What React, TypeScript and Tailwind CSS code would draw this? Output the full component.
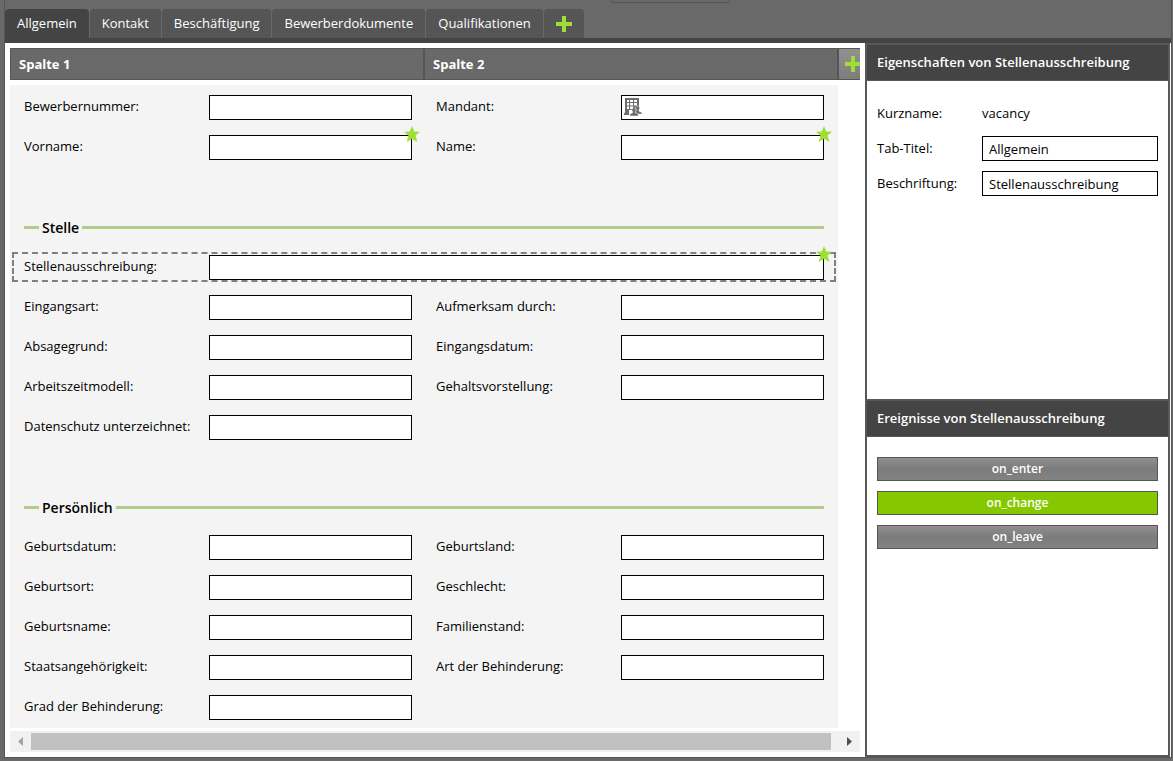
import { useId, useState } from "react";
import type { ReactNode } from "react";

function Plus() {
  return (
    <svg width="16" height="16" viewBox="0 0 16 16" fill="#9fde35" className="shrink-0" aria-hidden="true">
      <path d="M6 0h4v6h6v4h-6v6H6v-6H0V6h6z" />
    </svg>
  );
}

function Star() {
  return (
    <svg
      width="16"
      height="16"
      viewBox="0 0 16 16"
      fill="#9fde35"
      className="pointer-events-none absolute -top-[9px] -right-2"
      aria-hidden="true"
    >
      <path d="M8 0l2.300 5.500 5.700.3-4.400 3.800 1.700 6.400L8 12.800 2.700 16l1.700-6.400L0 5.800l5.700-.3z" />
    </svg>
  );
}

function CompanyIcon() {
  return (
    <svg
      width="18"
      height="18"
      viewBox="0 0 18 18"
      className="pointer-events-none absolute top-[3px] left-[3px]"
      aria-hidden="true"
    >
      <path
        fill="#6c6c6c"
        fillRule="evenodd"
        d="M1 0h14v10h-4v2H5v3.500l.5 1.500H0v-1.500l1-1zM3 2v2h2V2zM6 2v2h3V2zM10 2v2h3V2zM3 5v2.500h2V5zM6 5v2.500h3V5zM10 5v2.500h3V5zM3 8.500V11h2V8.500zM6 8.500V11h3V8.500z"
      />
      <g fill="#6c6c6c" stroke="#fff" strokeWidth="0.400">
        <path d="M13.500 8c1.600 0 2.200 1 2.100 2.200-.1.900-.4 1.400-.7 1.900l.2 1.100 2.900 1.500V16h-6l-.5-2.600 1-1.300c-.5-.5-.9-1-.9-1.900 0-1.300.6-2.200 1.900-2.200z" />
        <path d="M10 9.800c1.500 0 2.100 1 2 2.200-.1.900-.4 1.400-.7 1.900l.1.800 2.800 1.300V18H6v-2l2.600-1.300.1-.8c-.3-.5-.6-1-.7-1.900-.1-1.200.5-2.200 2-2.200z" />
      </g>
    </svg>
  );
}

interface FieldProps {
  label: string;
  required?: boolean;
  wide?: boolean;
  selected?: boolean;
  icon?: ReactNode;
}

function Field({ label, required, wide, selected, icon }: FieldProps) {
  const id = useId();
  return (
    <div className={wide ? "relative col-span-2 flex" : "relative flex"}>
      {selected && (
        <div className="pointer-events-none absolute -inset-x-3 -top-[3px] -bottom-[2px] border-2 border-dashed border-[#808080]" />
      )}
      <label htmlFor={id} className="w-[185px] shrink-0 whitespace-nowrap leading-[23px]">
        {label}
      </label>
      <div className="relative min-w-0 flex-1">
        <input id={id} type="text" className="block h-[25px] w-full border border-black bg-white px-[6px] outline-none" />
        {icon}
        {required && <Star />}
      </div>
    </div>
  );
}

function GroupHeading({ children }: { children: ReactNode }) {
  return (
    <h2 className="col-span-2 flex items-center gap-[3px] text-sm leading-[25px] font-semibold">
      <span className="h-[3px] w-[15px] bg-[#b1cc8b]" />
      {children}
      <span className="h-[3px] flex-1 bg-[#b1cc8b]" />
    </h2>
  );
}

function Blank({ wide }: { wide?: boolean }) {
  return <div className={wide ? "col-span-2" : ""} />;
}

const tabs = ["Allgemein", "Kontakt", "Beschäftigung", "Bewerberdokumente", "Qualifikationen"];
const events = ["on_enter", "on_change", "on_leave"];

function PanelTitle({ children }: { children: ReactNode }) {
  return (
    <h2 className="h-9 border-b border-[#585858] bg-[#444] px-[10px] leading-[35px] font-semibold text-white">
      {children}
    </h2>
  );
}

export default function App() {
  const [tab, setTab] = useState("Allgemein");
  const [event, setEvent] = useState("on_change");

  return (
    <div className="flex min-h-screen bg-[#696969] pr-px pb-[3px] pl-1 font-['Open_Sans',sans-serif] text-[13px] text-black">
      <div className="flex min-w-0 flex-1 flex-col border-x border-b border-[#555]">
        <div className="flex h-[9px] items-start">
          <div className="ml-[606px] h-[3px] w-[119px] border-x border-b border-[#555]" />
        </div>
        <nav className="flex h-[34px] items-start gap-px border-b-[5px] border-[#444]">
          {tabs.map((name) => (
            <button
              key={name}
              type="button"
              onClick={() => setTab(name)}
              className={
                name === tab
                  ? "h-[29px] rounded-t bg-[#444] px-3 text-white"
                  : "h-[29px] rounded-t bg-[#555] px-3 text-white"
              }
            >
              {name}
            </button>
          ))}
          <button type="button" aria-label="Tab hinzufügen" className="h-[29px] rounded-t bg-[#555] px-3">
            <Plus />
          </button>
        </nav>

        <div className="flex flex-1 bg-white pr-px">
          <main className="flex min-w-0 flex-1 flex-col p-[5px]">
            <div className="flex h-8 overflow-hidden border-y border-[#555] bg-[#696969] leading-[30px] font-bold text-white">
              <div className="flex-1 border-x border-[#555] px-2">Spalte 1</div>
              <div className="flex-1 border-x border-[#555] px-2">Spalte 2</div>
              <button
                type="button"
                aria-label="Spalte hinzufügen"
                className="flex w-[22px] items-center overflow-hidden border-l border-[#555] bg-linear-to-b from-[#929292] to-[#7c7c7c] pl-[6px]"
              >
                <Plus />
              </button>
            </div>

            <form className="mt-[5px] mr-[22px] grid auto-rows-[25px] grid-cols-2 gap-x-6 gap-y-[15px] bg-[#f4f4f4] px-[14px] pt-[10px] pb-2">
              <Field label="Bewerbernummer:" />
              <Field label="Mandant:" icon={<CompanyIcon />} />
              <Field label="Vorname:" required />
              <Field label="Name:" required />
              <Blank wide />
              <GroupHeading>Stelle</GroupHeading>
              <Field label="Stellenausschreibung:" wide required selected />
              <Field label="Eingangsart:" />
              <Field label="Aufmerksam durch:" />
              <Field label="Absagegrund:" />
              <Field label="Eingangsdatum:" />
              <Field label="Arbeitszeitmodell:" />
              <Field label="Gehaltsvorstellung:" />
              <Field label="Datenschutz unterzeichnet:" />
              <Blank />
              <Blank wide />
              <GroupHeading>Persönlich</GroupHeading>
              <Field label="Geburtsdatum:" />
              <Field label="Geburtsland:" />
              <Field label="Geburtsort:" />
              <Field label="Geschlecht:" />
              <Field label="Geburtsname:" />
              <Field label="Familienstand:" />
              <Field label="Staatsangehörigkeit:" />
              <Field label="Art der Behinderung:" />
              <Field label="Grad der Behinderung:" />
            </form>

            <div className="mt-[3px] flex h-[21px] items-center bg-[#f1f1f1]">
              <button type="button" aria-label="Nach links" className="flex w-[21px] justify-center">
                <svg width="5" height="9" viewBox="0 0 5 9" fill="#a3a3a3" aria-hidden="true">
                  <path d="M5 0v9L0 4.500z" />
                </svg>
              </button>
              <div className="h-[17px] flex-1 bg-[#c1c1c1]" />
              <div className="w-2" />
              <button type="button" aria-label="Nach rechts" className="flex w-[21px] justify-center">
                <svg width="5" height="9" viewBox="0 0 5 9" fill="#505050" aria-hidden="true">
                  <path d="M0 0v9l5-4.500z" />
                </svg>
              </button>
            </div>
          </main>

          <aside className="flex w-[305px] shrink-0 flex-col gap-[2px] border-2 border-[#585858] bg-[#585858]">
            <section className="flex-1 bg-white">
              <PanelTitle>Eigenschaften von Stellenausschreibung</PanelTitle>
              <div className="grid auto-rows-[25px] grid-cols-[105px_1fr] gap-y-[10px] px-[10px] pt-5 leading-[25px]">
                <span>Kurzname:</span>
                <span>vacancy</span>
                <label htmlFor="tab-title">Tab-Titel:</label>
                <input
                  id="tab-title"
                  type="text"
                  defaultValue="Allgemein"
                  className="w-full min-w-0 border border-black px-[6px] pt-px outline-none"
                />
                <label htmlFor="caption">Beschriftung:</label>
                <input
                  id="caption"
                  type="text"
                  defaultValue="Stellenausschreibung"
                  className="w-full min-w-0 border border-black px-[6px] pt-px outline-none"
                />
              </div>
            </section>
            <section className="flex-1 bg-white">
              <PanelTitle>Ereignisse von Stellenausschreibung</PanelTitle>
              <div className="flex flex-col gap-[10px] px-[10px] pt-5">
                {events.map((name) => (
                  <button
                    key={name}
                    type="button"
                    onClick={() => setEvent(name)}
                    className={
                      name === event
                        ? "h-6 border border-[#555] bg-[#86c800] text-xs font-semibold text-white"
                        : "h-6 border border-[#555] bg-linear-to-b from-[#909090] via-[#7c7c7c] to-[#828282] text-xs font-semibold text-white"
                    }
                  >
                    {name}
                  </button>
                ))}
              </div>
            </section>
          </aside>
        </div>
      </div>
    </div>
  );
}
